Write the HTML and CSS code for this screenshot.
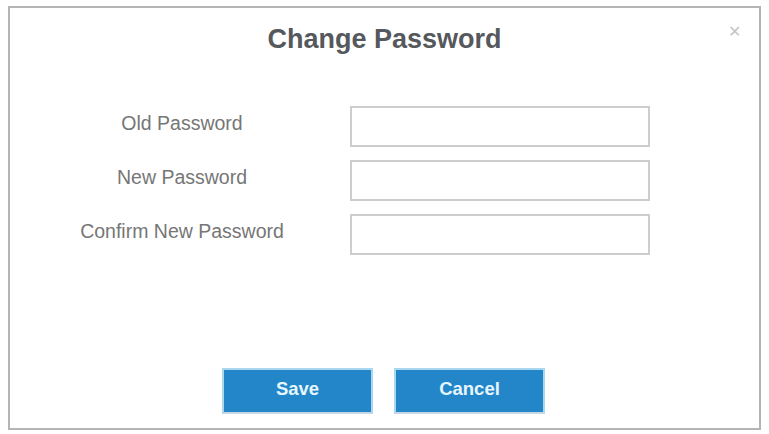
FILE: index.html
```html
<!DOCTYPE html>
<html>
<head>
<meta charset="utf-8">
<link rel="stylesheet" href="styles.css">
</head>
<body>
<div class="dialog">
  <div class="header">
    <h1 class="title">Change Password</h1>
    <span class="close">&#x2715;</span>
  </div>
  <form class="form">
    <label class="label">Old Password</label>
    <input class="field" type="password">
    <label class="label">New Password</label>
    <input class="field" type="password">
    <label class="label">Confirm New Password</label>
    <input class="field" type="password">
  </form>
  <div class="actions">
    <button class="btn" type="button">Save</button>
    <button class="btn" type="button">Cancel</button>
  </div>
</div>
</body>
</html>
```
FILE: styles.css
```css
html, body {
  margin: 0;
  padding: 0;
  background: #ffffff;
}
body {
  padding: 6px 8px 0 8px;
  font-family: "Liberation Sans", Arial, sans-serif;
}
.dialog {
  box-sizing: border-box;
  width: 753px;
  height: 424px;
  border: 2px solid #b4b4b4;
  background: #fff;
  display: flex;
  flex-direction: column;
}
.header {
  position: relative;
  height: 64px;
  display: flex;
  justify-content: center;
}
.title {
  margin: 16px 0 0 0;
  font-size: 27px;
  font-weight: bold;
  color: #55585c;
  line-height: 30px;
}
.close {
  position: absolute;
  right: 18px;
  top: 14px;
  font-size: 16px;
  color: #c4c4c4;
}
.form {
  margin: 34px 0 0 0;
  display: grid;
  grid-template-columns: 340px 300px;
  grid-auto-rows: 41px;
  row-gap: 13px;
  align-items: center;
}
.label {
  text-align: center;
  font-size: 19.5px;
  color: #767676;
  padding: 0 0 6px 4px;
}
.field {
  box-sizing: border-box;
  width: 300px;
  height: 41px;
  border: 2px solid #cdcdcd;
  background: #fff;
  margin: 0;
  padding: 0;
}
.actions {
  margin-top: auto;
  margin-bottom: 14px;
  display: flex;
  justify-content: center;
  gap: 21px;
  padding-right: 2px;
}
.btn {
  box-sizing: border-box;
  width: 151px;
  height: 46px;
  background: #2386c8;
  border: 2px solid #a9d7ef;
  border-bottom-color: #c5d8e4;
  color: #e6f6ff;
  font-family: "Liberation Sans", Arial, sans-serif;
  font-weight: bold;
  font-size: 18.5px;
  padding: 0 0 4px 0;
}
```
